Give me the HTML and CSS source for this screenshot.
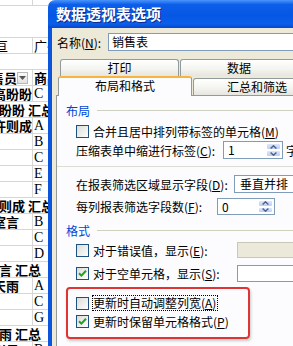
FILE: index.html
```html
<!DOCTYPE html>
<html lang="zh-CN">
<head>
    <meta charset="UTF-8">
    <title>数据透视表选项</title>
    <link rel="stylesheet" href="styles.css">
</head>
<body>
<div class="screen">
    <!-- hoja de cálculo detrás del diálogo -->
    <div class="sheet">
        <div class="sheet-row top"><span class="cell-a"></span><span class="cell-b"></span></div>
        <div class="sheet-row blank"></div>
        <div class="sheet-row"><span class="cell-a plain first">亘</span><span class="cell-b plain">广州</span></div>
        <div class="sheet-row"></div>
        <div class="sheet-row">
            <span class="cell-a head">销售员<span class="dd"><svg width="7" height="4" viewBox="0 0 7 4"><path d="M0 0 L7 0 L3.5 4 Z" fill="#555"/></svg></span></span>
            <span class="cell-b">商品</span>
        </div>
        <div class="sheet-row"><span class="cell-a">高盼盼</span><span class="cell-b letter">C</span></div>
        <div class="sheet-row"><span class="cell-total">高盼盼 汇总</span></div>
        <div class="sheet-row"><span class="cell-a">许则成</span><span class="cell-b letter">A</span></div>
        <div class="sheet-row"><span class="cell-a"></span><span class="cell-b letter">B</span></div>
        <div class="sheet-row"><span class="cell-a"></span><span class="cell-b letter">C</span></div>
        <div class="sheet-row"><span class="cell-a"></span><span class="cell-b letter">E</span></div>
        <div class="sheet-row"><span class="cell-a"></span><span class="cell-b letter">F</span></div>
        <div class="sheet-row"><span class="cell-total">许则成 汇总</span></div>
        <div class="sheet-row"><span class="cell-a">室言</span><span class="cell-b letter">B</span></div>
        <div class="sheet-row"><span class="cell-a"></span><span class="cell-b letter">C</span></div>
        <div class="sheet-row"><span class="cell-a"></span><span class="cell-b letter">D</span></div>
        <div class="sheet-row"><span class="cell-total">室言 汇总</span></div>
        <div class="sheet-row"><span class="cell-a">天雨</span><span class="cell-b letter">A</span></div>
        <div class="sheet-row"><span class="cell-a"></span><span class="cell-b letter">C</span></div>
        <div class="sheet-row"><span class="cell-a"></span><span class="cell-b letter">G</span></div>
        <div class="sheet-row"><span class="cell-total">天雨 汇总</span></div>
        <div class="sheet-row"><span class="cell-a">赵云</span><span class="cell-b letter">B</span></div>
    </div>

    <div class="dialog">
        <div class="titlebar">数据透视表选项</div>
        <div class="dialog-body">
            <div class="name-row">
                <span class="name-label">名称(<u>N</u>):</span>
                <div class="text-input">销售表</div>
            </div>

            <div class="tab-row1">
                <div class="tab t-print">打印</div>
                <div class="tab t-data">数据</div>
            </div>
            <div class="tab-row2">
                <div class="tab tab-active">布局和格式</div>
                <div class="tab t-total">汇总和筛选</div>
            </div>

            <div class="panel">
                <div class="group-head">布局</div>
                <div class="row">
                    <span class="check"></span>
                    <span>合并且居中排列带标签的单元格(<u>M</u>)</span>
                </div>
                <div class="row field">
                    <span class="lbl w-c">压缩表单中缩进行标签(<u>C</u>):</span>
                    <div class="spin w60">
                        <span class="spin-val">1</span>
                        <span class="spin-btns">
                            <span class="spin-btn"><svg width="7" height="4" viewBox="0 0 7 4"><path d="M0.6 3.5 L3.5 0.8 L6.4 3.5" fill="none" stroke="#4d6185" stroke-width="1.4"/></svg></span>
                            <span class="spin-btn"><svg width="7" height="4" viewBox="0 0 7 4"><path d="M0.6 0.5 L3.5 3.2 L6.4 0.5" fill="none" stroke="#4d6185" stroke-width="1.4"/></svg></span>
                        </span>
                    </div>
                    <span class="unit">字符</span>
                </div>
                <div class="sep"></div>
                <div class="row field">
                    <span class="lbl w-d">在报表筛选区域显示字段(<u>D</u>):</span>
                    <div class="select">垂直并排</div>
                </div>
                <div class="row field short">
                    <span class="lbl w-f">每列报表筛选字段数(<u>F</u>):</span>
                    <div class="spin w58">
                        <span class="spin-val">0</span>
                        <span class="spin-btns">
                            <span class="spin-btn"><svg width="7" height="4" viewBox="0 0 7 4"><path d="M0.6 3.5 L3.5 0.8 L6.4 3.5" fill="none" stroke="#4d6185" stroke-width="1.4"/></svg></span>
                            <span class="spin-btn"><svg width="7" height="4" viewBox="0 0 7 4"><path d="M0.6 0.5 L3.5 3.2 L6.4 0.5" fill="none" stroke="#4d6185" stroke-width="1.4"/></svg></span>
                        </span>
                    </div>
                </div>

                <div class="group-head second">格式</div>
                <div class="row field">
                    <span class="check"></span>
                    <span class="lbl w-e">对于错误值，显示(<u>E</u>):</span>
                    <div class="text-input disabled"></div>
                </div>
                <div class="row field next">
                    <span class="check checked"><svg width="11" height="11" viewBox="0 0 11 11"><path d="M2 5.2 L4.4 7.6 L9 2.8" fill="none" stroke="#21a121" stroke-width="2"/></svg></span>
                    <span class="lbl w-e">对于空单元格，显示(<u>S</u>):</span>
                    <div class="text-input empty"></div>
                </div>

                <div class="redbox">
                    <div class="row">
                        <span class="check tight"></span>
                        <span class="focus">更新时自动调整列宽(<u>A</u>)</span>
                    </div>
                    <div class="row second-line">
                        <span class="check checked"><svg width="11" height="11" viewBox="0 0 11 11"><path d="M2 5.2 L4.4 7.6 L9 2.8" fill="none" stroke="#21a121" stroke-width="2"/></svg></span>
                        <span>更新时保留单元格格式(<u>P</u>)</span>
                    </div>
                </div>
            </div>
        </div>
    </div>
</div>
</body>
</html>
```

FILE: styles.css
```css
body {
    margin: 0;
    background: #fff;
    font-family: "Noto Sans CJK SC", sans-serif;
    font-size: 12px;
    color: #000;
}

.screen {
    display: flex;
    width: 293px;
    height: 346px;
    overflow: hidden;
}

/* hoja */
.sheet {
    flex: none;
    width: 48px;
    overflow: hidden;
    font-weight: bold;
    font-size: 13px;
}

.sheet-row {
    display: flex;
    height: 16px;
    box-sizing: border-box;
    border-bottom: 1px solid #d6d6d6;
    line-height: 15px;
    white-space: nowrap;
}

.sheet-row.top {
    height: 6px;
}

.sheet-row.blank {
    height: 32px;
}

.cell-a {
    flex: none;
    width: 39px;
    margin-left: -7px;
    overflow: hidden;
}

.cell-a.first {
    padding-left: 2px;
    box-sizing: border-box;
}

.cell-a.head {
    display: flex;
    justify-content: flex-end;
    align-items: center;
    padding-right: 4px;
    box-sizing: border-box;
}

.dd {
    flex: none;
    display: flex;
    align-items: center;
    justify-content: center;
    width: 11px;
    height: 12px;
    box-sizing: border-box;
    border: 1px solid #b8b8b8;
    background: linear-gradient(#fafafa, #e2e2e2);
}

.cell-b {
    flex: none;
    width: 20px;
    padding-left: 1px;
    border-left: 1px solid #d6d6d6;
}

.cell-total {
    margin-left: -14px;
}

.plain {
    font-weight: normal;
}

.letter {
    font-family: "Liberation Serif", serif;
    font-weight: normal;
    font-size: 14px;
}

/* dialogo */
.dialog {
    flex: none;
    width: 300px;
    display: flex;
    flex-direction: column;
}

.titlebar {
    flex: none;
    height: 28px;
    padding-left: 8px;
    border-top-left-radius: 7px;
    background: linear-gradient(#4a94fa, #0d5fea 16%, #0557e4 55%, #0a5ee9 85%, #0747cc);
    color: #fff;
    font-weight: bold;
    font-size: 15px;
    line-height: 28px;
    text-shadow: 1px 1px #0b2a8f;
}

.dialog-body {
    flex: 1;
    background: #ece9d8;
    border-left: 4px solid #0b55dc;
    padding: 5px 0 0 4px;
}

.name-row {
    display: flex;
    align-items: center;
    height: 18px;
}

.name-label {
    flex: none;
    width: 52px;
    padding-left: 1px;
    box-sizing: border-box;
}

.text-input {
    flex: 1;
    height: 18px;
    box-sizing: border-box;
    border: 1px solid #7f9db9;
    background: #fff;
    padding-left: 3px;
    line-height: 16px;
}

u {
    text-underline-offset: 1px;
}

/* pestanas */
.tab-row1 {
    display: flex;
    height: 17px;
    margin: 8px 0 0 4px;
}

.tab {
    flex: none;
    box-sizing: border-box;
    border: 1px solid #919b9c;
    border-bottom: none;
    border-radius: 3px 3px 0 0;
    background: linear-gradient(#fff, #f3f3ef 60%, #e6e5df);
    text-align: center;
    line-height: 16px;
}

.t-print {
    width: 119px;
}

.t-data {
    width: 118px;
    margin-left: 1px;
}

.tab-row2 {
    display: flex;
    align-items: flex-start;
    height: 20px;
    margin: 0 0 -1px 2px;
    position: relative;
    z-index: 1;
}

.tab-active {
    width: 134px;
    height: 20px;
    border-top: 2px solid #f7b53e;
    background: #fcfcfe;
    line-height: 15px;
}

.t-total {
    width: 128px;
    height: 17px;
    margin: 2px 0 0 1px;
}

.panel {
    height: 300px;
    border: 1px solid #919b9c;
    background: #fcfcfe;
    padding: 7px 0 0 9px;
}

.group-head {
    display: flex;
    align-items: center;
    height: 14px;
    color: #0046d5;
    font-size: 12px;
}

.group-head::after {
    content: '';
    flex: 1;
    height: 1px;
    margin-left: 7px;
    background: #d0d0bf;
}

.group-head.second {
    margin-top: 8px;
}

.row {
    display: flex;
    align-items: center;
    height: 16px;
    margin: 6px 0 0 10px;
    white-space: nowrap;
}

.row.field {
    height: 18px;
    margin-top: 2px;
}

.group-head + .row.field {
    margin-top: 4px;
}

.sep + .row.field {
    margin-top: 8px;
}

.row.field.short {
    height: 17px;
    margin-top: 5px;
}

.row.field.next {
    margin-top: 5px;
}

.lbl {
    flex: none;
}

.w-c { width: 147px; }
.w-d { width: 158px; }
.w-f { width: 141px; }
.w-e { width: 144px; }

.check {
    flex: none;
    display: flex;
    align-items: center;
    justify-content: center;
    width: 13px;
    height: 13px;
    box-sizing: border-box;
    margin-right: 4px;
    border: 1px solid #1c5180;
    background: linear-gradient(135deg, #dcdcd7, #fefefe);
}

.check.tight {
    margin-right: 3px;
}

.sep {
    height: 1px;
    margin: 7px 0 0 -9px;
    background: #dcdcd2;
}

.spin {
    flex: none;
    display: flex;
    height: 18px;
    box-sizing: border-box;
    border: 1px solid #7f9db9;
    background: #fff;
}

.short .spin {
    height: 17px;
}

.w60 { width: 60px; }
.w58 { width: 58px; }

.spin-val {
    flex: 1;
    padding-left: 4px;
    line-height: 16px;
}

.spin-btns {
    flex: none;
    display: flex;
    flex-direction: column;
    width: 15px;
    margin: 1px 1px 1px 0;
}

.spin-btn {
    flex: 1;
    display: flex;
    align-items: center;
    justify-content: center;
    border-radius: 2px;
    background: linear-gradient(#dde7fd, #bccdf7);
    border: 1px solid #fff;
    box-sizing: border-box;
}

.unit {
    margin-left: 3px;
}

.select {
    flex: none;
    width: 100px;
    height: 18px;
    box-sizing: border-box;
    border: 1px solid #7f9db9;
    background: #fff;
    padding-left: 5px;
    line-height: 16px;
}

.text-input.disabled {
    flex: none;
    width: 80px;
    height: 16px;
    border-color: #c9c7ba;
    background: #ebe9da;
}

.text-input.empty {
    flex: none;
    width: 80px;
    height: 17px;
}

.redbox {
    width: 184px;
    box-sizing: border-box;
    margin-top: 5px;
    padding: 6px 0 8px 8px;
    border: 2px solid #de3434;
    border-radius: 4px;
    box-shadow: 1px 2px 3px rgba(0, 0, 0, 0.2);
}

.redbox .row {
    margin: 0;
}

.redbox .row.second-line {
    margin-top: 2px;
}

.focus {
    border: 1px dotted #000;
    padding: 0 1px 0 0;
    line-height: 14px;
}
```
